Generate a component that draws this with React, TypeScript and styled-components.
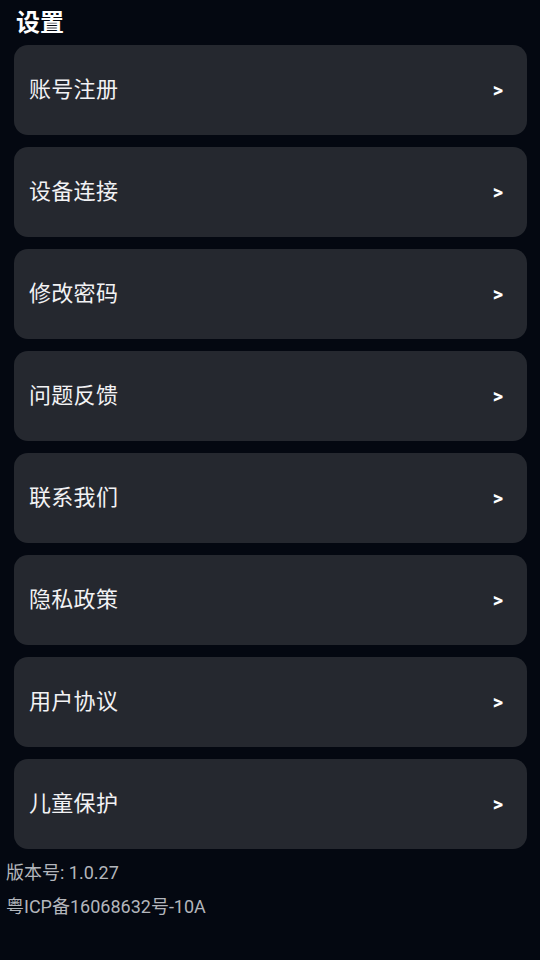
import React from "react";
import styled, { createGlobalStyle } from "styled-components";

const GlobalStyle = createGlobalStyle`
  html, body {
    margin: 0;
    padding: 0;
    background: #040811;
  }
  body {
    font-family: Roboto, "Noto Sans CJK SC", "Noto Sans", sans-serif;
    color: #ffffff;
  }
`;

const Page = styled.div`
  width: 540px;
  min-height: 960px;
  box-sizing: border-box;
  background: #040811;
  padding: 6px 13px 0 14px;
`;

const Title = styled.h1`
  margin: 0;
  padding-left: 2px;
  font-family: "Noto Sans CJK SC", sans-serif;
  font-size: 24px;
  line-height: 30px;
  font-weight: 700;
  color: #ffffff;
`;

const List = styled.div`
  margin-top: 9px;
  display: flex;
  flex-direction: column;
  gap: 12px;
`;

const Row = styled.div`
  height: 90px;
  box-sizing: border-box;
  border-radius: 14px;
  background: #25282f;
  display: flex;
  align-items: center;
  justify-content: space-between;
  padding: 0 24px 0 15px;
`;

const Label = styled.span`
  font-family: "Noto Sans CJK SC", sans-serif;
  font-size: 22px;
  line-height: 1;
  margin-bottom: 6px;
  color: #f2f2f4;
  letter-spacing: 0.3px;
`;

const Arrow = styled.span`
  font-family: Roboto, sans-serif;
  font-size: 20px;
  line-height: 1;
  font-weight: 700;
  margin-bottom: 1px;
  color: #ffffff;
`;

const Footer = styled.div`
  margin: 7px 0 0 -8px;
  display: flex;
  flex-direction: column;
`;

const FooterLine = styled.div`
  font-size: 18px;
  line-height: 34px;
  color: #b3b6bc;
`;

const items = [
  "账号注册",
  "设备连接",
  "修改密码",
  "问题反馈",
  "联系我们",
  "隐私政策",
  "用户协议",
  "儿童保护",
];

export default function App() {
  return (
    <>
      <GlobalStyle />
      <Page>
        <Title>设置</Title>
        <List>
          {items.map((t) => (
            <Row key={t}>
              <Label>{t}</Label>
              <Arrow>&gt;</Arrow>
            </Row>
          ))}
        </List>
        <Footer>
          <FooterLine>版本号: 1.0.27</FooterLine>
          <FooterLine>粤ICP备16068632号-10A</FooterLine>
        </Footer>
      </Page>
    </>
  );
}
